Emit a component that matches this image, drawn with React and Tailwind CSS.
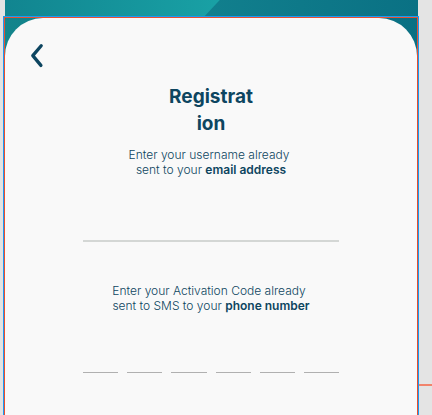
import React from "react";

const codeSlots = [1, 2, 3, 4, 5, 6];

function Instructions({ htmlFor, first, second, strong }) {
  return (
    <label
      htmlFor={htmlFor}
      className="block text-center font-['Inter',sans-serif] text-[12px] leading-[15px] font-light text-[#0d4560]"
    >
      <span className="block pr-1">{first}</span>
      <span className="block">
        {second} <strong className="font-semibold">{strong}</strong>
      </span>
    </label>
  );
}

export default function App() {
  return (
    <div className="flex min-h-screen flex-col bg-[#e4e4e4]">
      <header className="mr-[14px] ml-[5px] h-4 overflow-hidden bg-gradient-to-r from-[#118693] via-[#117f8d] to-[#0a7184]">
        <div className="h-full w-[52%] bg-gradient-to-r from-[#118590] to-[#19a1a5] [clip-path:polygon(0_0,100%_0,calc(100%_-_15px)_100%,0_100%)]" />
      </header>

      <div className="flex grow">
        <main className="ml-[3px] flex grow flex-col border-x border-t border-[#1a9cf5]">
          <div className="flex grow flex-col border-x border-t border-[#e8502f] bg-gradient-to-r from-[#13858c] to-[#0a7083]">
            <div className="grow rounded-t-[38px] bg-[#f9f9f9] pt-[25px]">
              <button type="button" aria-label="Back" className="ml-[25px] block h-[26px] w-4">
                <svg viewBox="0 0 16 26" className="h-full w-full" fill="none" aria-hidden="true">
                  <path
                    d="M11.2 2.8 L2.8 12.6 L10.9 22.4"
                    stroke="#0d4560"
                    strokeWidth="3.3"
                    strokeLinecap="round"
                    strokeLinejoin="round"
                  />
                </svg>
              </button>

              <form className="mx-auto flex w-64 flex-col pt-[14px]">
                <h1 className="mx-auto w-[88px] text-center font-['Inter',sans-serif] text-[19px] leading-[27px] font-bold break-all text-[#0d4560]">
                  Registration
                </h1>

                <div className="pt-[10px]">
                  <Instructions
                    htmlFor="username"
                    first="Enter your username already"
                    second="sent to your"
                    strong="email address"
                  />
                </div>
                <input
                  id="username"
                  type="text"
                  className="mt-[25px] h-10 w-full border-b-2 border-[#d4d7d5] bg-transparent text-center text-[#0d4560] outline-none"
                />

                <div className="pt-[41px]">
                  <Instructions
                    htmlFor="code-1"
                    first="Enter your Activation Code already"
                    second="sent to SMS to your"
                    strong="phone number"
                  />
                </div>
                <div className="mt-[25px] flex gap-[9px]">
                  {codeSlots.map((slot) => (
                    <input
                      key={slot}
                      id={`code-${slot}`}
                      type="text"
                      inputMode="numeric"
                      maxLength={1}
                      aria-label={`Code digit ${slot}`}
                      className="h-[35px] min-w-0 flex-1 border-b border-[#b0b0b0] bg-transparent text-center text-[#0d4560] outline-none"
                    />
                  ))}
                </div>
              </form>
            </div>
          </div>
        </main>
        <aside className="flex w-[13px] flex-col justify-end pb-[29px]">
          <div className="h-[2px] bg-[#f1846c]" />
        </aside>
      </div>
    </div>
  );
}
